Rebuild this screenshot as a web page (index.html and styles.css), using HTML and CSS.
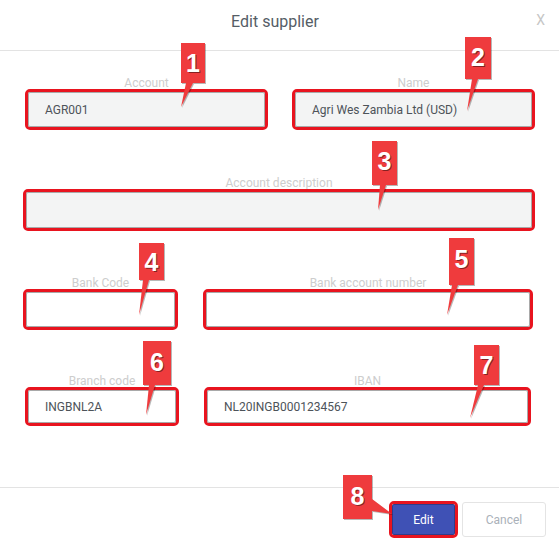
FILE: index.html
```html
<!DOCTYPE html>
<html>
<head>
<meta charset="utf-8">
<title>Edit supplier</title>
<link rel="stylesheet" href="styles.css">
</head>
<body>
<div class="modal">
  <header class="head">
    <span></span>
    <h1 class="title">Edit supplier</h1>
    <span class="close">X</span>
  </header>
  <main class="body">
    <div class="row r1">
      <div class="field">
        <label class="lbl">Account</label>
        <div class="hl"><div class="inp filled">AGR001</div></div>
      </div>
      <div class="field">
        <label class="lbl">Name</label>
        <div class="hl"><div class="inp filled">Agri Wes Zambia Ltd (USD)</div></div>
      </div>
    </div>
    <div class="row r2">
      <div class="field">
        <label class="lbl">Account description</label>
        <div class="hl tall"><div class="inp filled"></div></div>
      </div>
    </div>
    <div class="row r3">
      <div class="field">
        <label class="lbl">Bank Code</label>
        <div class="hl"><div class="inp"></div></div>
      </div>
      <div class="field">
        <label class="lbl">Bank account number</label>
        <div class="hl"><div class="inp"></div></div>
      </div>
    </div>
    <div class="row r4">
      <div class="field">
        <label class="lbl">Branch code</label>
        <div class="hl short"><div class="inp">INGBNL2A</div></div>
      </div>
      <div class="field">
        <label class="lbl">IBAN</label>
        <div class="hl short"><div class="inp">NL20INGB0001234567</div></div>
      </div>
    </div>
  </main>
  <footer class="foot">
    <div class="edit-hl"><button class="btn-edit">Edit</button></div>
    <button class="btn-cancel">Cancel</button>
  </footer>

  <svg class="notes" width="559" height="548" viewBox="0 0 559 548">
    <g class="shadow" transform="translate(1,1)">
      <rect x="181" y="43" width="24" height="40"/><polygon points="186,83 193,83 181,107"/>
      <rect x="465" y="37" width="26" height="42"/><polygon points="472,79 478,79 467,111"/>
      <rect x="372" y="141" width="25" height="44"/><polygon points="380,185 386,185 378,210"/>
      <rect x="139" y="243" width="25" height="37"/><polygon points="143,280 149,280 139,315"/>
      <rect x="449" y="238" width="25" height="47"/><polygon points="452,285 458,285 447,315"/>
      <rect x="143" y="341" width="28" height="44"/><polygon points="149,385 155,385 146,415"/>
      <rect x="474" y="345" width="25" height="40"/><polygon points="478,385 484,385 470,418"/>
      <rect x="343" y="475" width="29" height="44"/><polygon points="372,499 372,511 392,514"/>
    </g>
    <g class="tag">
      <rect x="181" y="43" width="24" height="40"/><polygon points="186,83 193,83 181,107"/>
      <rect x="465" y="37" width="26" height="42"/><polygon points="472,79 478,79 467,111"/>
      <rect x="372" y="141" width="25" height="44"/><polygon points="380,185 386,185 378,210"/>
      <rect x="139" y="243" width="25" height="37"/><polygon points="143,280 149,280 139,315"/>
      <rect x="449" y="238" width="25" height="47"/><polygon points="452,285 458,285 447,315"/>
      <rect x="143" y="341" width="28" height="44"/><polygon points="149,385 155,385 146,415"/>
      <rect x="474" y="345" width="25" height="40"/><polygon points="478,385 484,385 470,418"/>
      <rect x="343" y="475" width="29" height="44"/><polygon points="372,499 372,511 392,514"/>
    </g>
    <g class="num-shadow" transform="translate(1,1)">
      <text x="193" y="72">1</text>
      <text x="478" y="66">2</text>
      <text x="384.5" y="170">3</text>
      <text x="151.5" y="271">4</text>
      <text x="461.5" y="268">5</text>
      <text x="157" y="371">6</text>
      <text x="486.5" y="374">7</text>
      <text x="357.5" y="505">8</text>
    </g>
    <g class="num">
      <text x="193" y="72">1</text>
      <text x="478" y="66">2</text>
      <text x="384.5" y="170">3</text>
      <text x="151.5" y="271">4</text>
      <text x="461.5" y="268">5</text>
      <text x="157" y="371">6</text>
      <text x="486.5" y="374">7</text>
      <text x="357.5" y="505">8</text>
    </g>
  </svg>
</div>
</body>
</html>
```

FILE: styles.css
```css
* { box-sizing: border-box; }
html, body { margin: 0; padding: 0; background: #fff; }
body { font-family: Roboto, "Liberation Sans", sans-serif; }

.modal {
  position: relative;
  width: 559px;
  height: 548px;
  display: flex;
  flex-direction: column;
  background: #fff;
}

.head {
  height: 51px;
  flex: none;
  border-bottom: 1px solid #e3e3e3;
  display: grid;
  grid-template-columns: 1fr auto 1fr;
  align-items: start;
  padding: 12px 14px 0 5px;
}
.title {
  margin: 0;
  font-size: 16px;
  line-height: 20px;
  font-weight: 400;
  color: #555d66;
}
.close {
  justify-self: end;
  font-size: 14px;
  line-height: 20px;
  color: #c6c6c6;
  margin-top: -2px;
}

.body {
  flex: 1;
  padding-top: 25px;
}
.row { display: grid; }
.r1 { grid-template-columns: 243px 243px; column-gap: 24px; margin-left: 25px; }
.r2 { grid-template-columns: 512px; margin-left: 23px; margin-top: 46px; }
.r3 { grid-template-columns: 155px 330px; column-gap: 25px; margin-left: 23px; margin-top: 45px; }
.r4 { grid-template-columns: 154px 327px; column-gap: 25px; margin-left: 25px; margin-top: 44px; }

.field { display: flex; flex-direction: column; }
.lbl {
  text-align: center;
  font-size: 12px;
  line-height: 14px;
  color: #cdcdcd;
  margin-bottom: -1px;
}
.hl {
  height: 41px;
  border: 3px solid #e8141f;
  border-radius: 5px;
}
.hl.tall { height: 42px; }
.hl.short { height: 39px; }
.inp {
  height: 100%;
  border: 1px solid #a9a9a9;
  border-radius: 2px;
  background: #fff;
  display: flex;
  align-items: center;
  padding-left: 16px;
  font-size: 12px;
  color: #4d5359;
}
.inp.filled { background: #f3f4f4; }

.foot {
  height: 61px;
  flex: none;
  border-top: 1px solid #e3e3e3;
  display: flex;
  justify-content: flex-end;
  align-items: flex-start;
  gap: 4px;
  padding: 13px 13px 0 0;
}
.edit-hl {
  width: 69px;
  height: 37px;
  border: 3px solid #e8141f;
  border-radius: 5px;
}
.btn-edit {
  width: 100%;
  height: 100%;
  border: 1px solid #2f3c8a;
  border-radius: 2px;
  background: #3f51b5;
  color: #fff;
  font-family: Roboto, "Liberation Sans", sans-serif;
  font-size: 12px;
  padding: 0;
}
.btn-cancel {
  width: 84px;
  height: 35px;
  margin-top: 1px;
  border: 1px solid #e4e4e4;
  border-radius: 3px;
  background: #fff;
  color: #aab1b9;
  font-family: Roboto, "Liberation Sans", sans-serif;
  font-size: 12px;
  padding: 0;
}

.notes {
  position: absolute;
  left: 0;
  top: 0;
  pointer-events: none;
}
.shadow { fill: rgba(0, 0, 0, 0.28); }
.tag { fill: #ef3b3d; }
.num, .num-shadow {
  font-family: "Liberation Sans", Arial, sans-serif;
  font-weight: 700;
  font-size: 25px;
  text-anchor: middle;
}
.num { fill: #fff; }
.num-shadow { fill: rgba(0, 0, 0, 0.45); }
```
